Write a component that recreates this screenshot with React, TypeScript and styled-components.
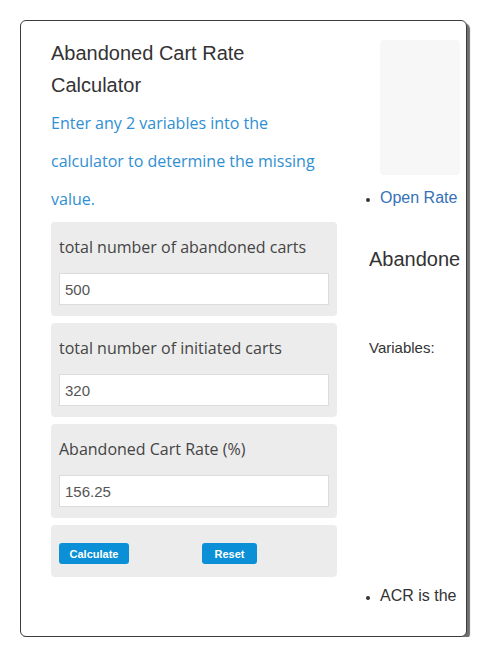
import React, { useState } from 'react'
import styled, { createGlobalStyle } from 'styled-components'

const GlobalStyle = createGlobalStyle`
    body {
        margin: 0;
        background: #ffffff;
        font-family: "Liberation Sans", Arial, sans-serif;
    }
`

const Page = styled.div`
    padding: 20px 0 0 20px;
`

const Card = styled.div`
    box-sizing: border-box;
    width: 447px;
    height: 617px;
    border: 1.5px solid #3c3c3c;
    border-radius: 6px;
    box-shadow: 3px 3px 1px #6f6f6f;
    background: #fff;
    display: flex;
    gap: 24px;
    padding: 16px 0 0 30px;
`

const Main = styled.div`
    width: 286px;
    flex: none;
`

const Title = styled.h1`
    margin: 0;
    font-size: 20px;
    line-height: 32px;
    font-weight: normal;
    color: #333;
`

const Intro = styled.p`
    margin: 3px 0 4px;
    font-family: "Open Sans", sans-serif;
    font-size: 16px;
    line-height: 38px;
    color: #2f8fd2;
`

const Panels = styled.div`
    display: flex;
    flex-direction: column;
    gap: 7px;
`

const Panel = styled.div`
    background: #ececec;
    border-radius: 4px;
    padding: 10px 8px 11px;
`

const Label = styled.div`
    font-family: "Open Sans", sans-serif;
    font-size: 16px;
    line-height: 30px;
    color: #444;
    margin-bottom: 11px;
`

const Field = styled.input`
    box-sizing: border-box;
    display: block;
    width: 100%;
    height: 32px;
    border: 1px solid #dcdcdc;
    background: #fff;
    padding: 0 5px;
    font-family: "Liberation Sans", Arial, sans-serif;
    font-size: 15px;
    color: #555;
    outline: none;
`

const ButtonRow = styled.div`
    background: #ececec;
    border-radius: 4px;
    padding: 18px 8px 13px;
    display: flex;
    gap: 73px;
`

const Button = styled.button<{ $w: number }>`
    width: ${p => p.$w}px;
    height: 21px;
    border: none;
    border-radius: 3px;
    background: #0b8fd7;
    color: #fff;
    font-family: "Liberation Sans", Arial, sans-serif;
    font-size: 11px;
    font-weight: bold;
    padding: 0;
    cursor: pointer;
`

const Side = styled.div`
    width: 99px;
    overflow: hidden;
    flex: none;
    white-space: nowrap;
`

const AdBox = styled.div`
    margin: 3px 0 0 19px;
    width: 80px;
    height: 135px;
    background: #f7f7f8;
    border-radius: 4px;
`

const List = styled.ul<{ $top: number }>`
    margin: ${p => p.$top}px 0 0;
    padding-left: 19px;
    font-size: 16px;
    line-height: 20px;
    color: #333;

    li::marker {
        font-size: 12px;
        color: #333;
    }
`

const Link = styled.a`
    color: #3471b8;
    text-decoration: none;
`

const SideHeading = styled.h2`
    margin: 39px 0 0 8px;
    font-size: 20px;
    line-height: 24px;
    font-weight: normal;
    color: #333;
`

const SideText = styled.p`
    margin: 67px 0 0 8px;
    font-size: 15px;
    line-height: 20px;
    color: #333;
`

export default function App() {
    const [abandoned, setAbandoned] = useState('500')
    const [initiated, setInitiated] = useState('320')
    const [rate, setRate] = useState('156.25')

    const calculate = () => {
        const a = parseFloat(abandoned)
        const i = parseFloat(initiated)
        if (!isNaN(a) && !isNaN(i) && i !== 0) setRate(String(Math.round(a / i * 10000) / 100))
    }

    return <Page>
        <GlobalStyle />
        <Card>
            <Main>
                <Title>Abandoned Cart Rate Calculator</Title>
                <Intro>Enter any 2 variables into the calculator to determine the missing value.</Intro>
                <Panels>
                    <Panel>
                        <Label>total number of abandoned carts</Label>
                        <Field value={abandoned} onChange={e => setAbandoned(e.target.value)} />
                    </Panel>
                    <Panel>
                        <Label>total number of initiated carts</Label>
                        <Field value={initiated} onChange={e => setInitiated(e.target.value)} />
                    </Panel>
                    <Panel>
                        <Label>Abandoned Cart Rate (%)</Label>
                        <Field value={rate} onChange={e => setRate(e.target.value)} />
                    </Panel>
                    <ButtonRow>
                        <Button $w={70} onClick={calculate}>Calculate</Button>
                        <Button $w={55} onClick={() => { setAbandoned(''); setInitiated(''); setRate('') }}>Reset</Button>
                    </ButtonRow>
                </Panels>
            </Main>
            <Side>
                <AdBox />
                <List $top={13}><li><Link href="#">Open Rate</Link></li></List>
                <SideHeading>Abandoned Cart Rate Formula</SideHeading>
                <SideText>Variables:</SideText>
                <List $top={228}><li>ACR is the abandoned cart rate</li></List>
            </Side>
        </Card>
    </Page>
}
